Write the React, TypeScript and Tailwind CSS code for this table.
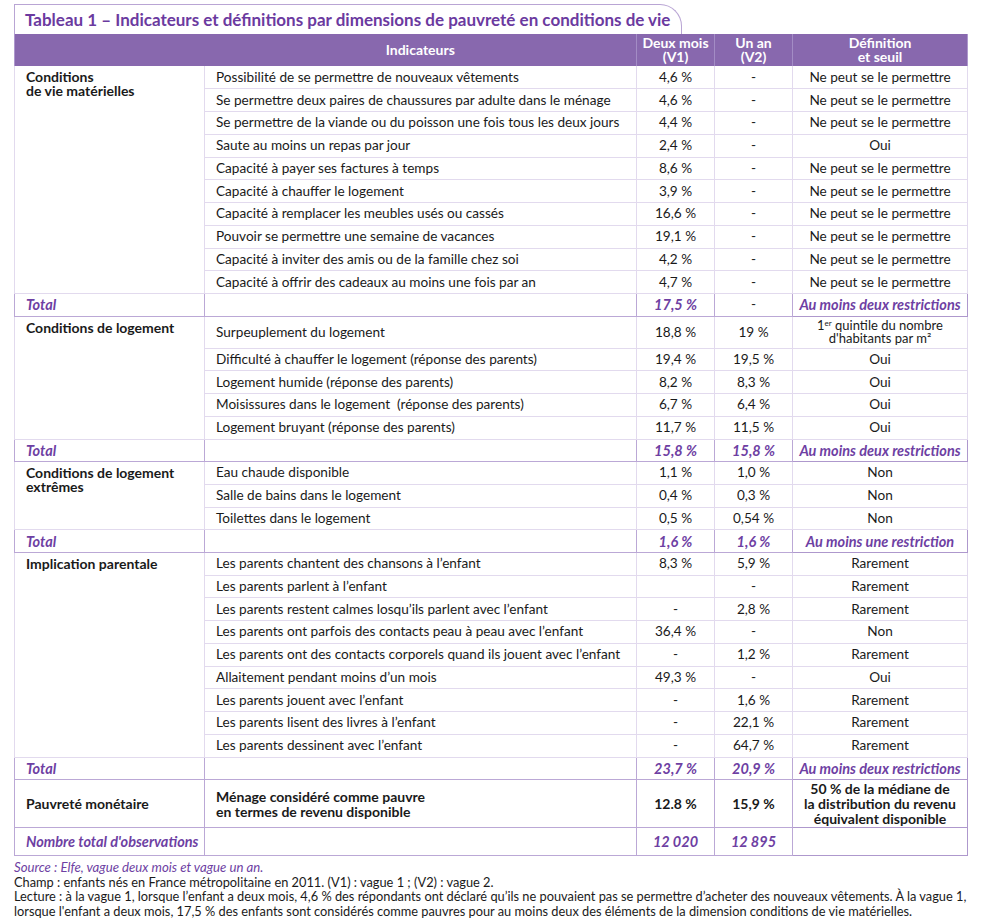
import React from 'react';

type Row = [string, string, string, string];

type Group = {
  label: string[];
  rows: Row[];
  total: [string, string, string];
};

const NPP = 'Ne peut se le permettre';

const groups: Group[] = [
  {
    label: ['Conditions', 'de vie matérielles'],
    rows: [
      ['Possibilité de se permettre de nouveaux vêtements', '4,6 %', '-', NPP],
      ['Se permettre deux paires de chaussures par adulte dans le ménage', '4,6 %', '-', NPP],
      ['Se permettre de la viande ou du poisson une fois tous les deux jours', '4,4 %', '-', NPP],
      ['Saute au moins un repas par jour', '2,4 %', '-', 'Oui'],
      ['Capacité à payer ses factures à temps', '8,6 %', '-', NPP],
      ['Capacité à chauffer le logement', '3,9 %', '-', NPP],
      ['Capacité à remplacer les meubles usés ou cassés', '16,6 %', '-', NPP],
      ['Pouvoir se permettre une semaine de vacances', '19,1 %', '-', NPP],
      ['Capacité à inviter des amis ou de la famille chez soi', '4,2 %', '-', NPP],
      ['Capacité à offrir des cadeaux au moins une fois par an', '4,7 %', '-', NPP],
    ],
    total: ['17,5 %', '-', 'Au moins deux restrictions'],
  },
  {
    label: ['Conditions de logement'],
    rows: [
      ['Surpeuplement du logement', '18,8 %', '19 %', 'QUINTILE'],
      ['Difficulté à chauffer le logement (réponse des parents)', '19,4 %', '19,5 %', 'Oui'],
      ['Logement humide (réponse des parents)', '8,2 %', '8,3 %', 'Oui'],
      ['Moisissures dans le logement  (réponse des parents)', '6,7 %', '6,4 %', 'Oui'],
      ['Logement bruyant (réponse des parents)', '11,7 %', '11,5 %', 'Oui'],
    ],
    total: ['15,8 %', '15,8 %', 'Au moins deux restrictions'],
  },
  {
    label: ['Conditions de logement', 'extrêmes'],
    rows: [
      ['Eau chaude disponible', '1,1 %', '1,0 %', 'Non'],
      ['Salle de bains dans le logement', '0,4 %', '0,3 %', 'Non'],
      ['Toilettes dans le logement', '0,5 %', '0,54 %', 'Non'],
    ],
    total: ['1,6 %', '1,6 %', 'Au moins une restriction'],
  },
  {
    label: ['Implication parentale'],
    rows: [
      ['Les parents chantent des chansons à l’enfant', '8,3 %', '5,9 %', 'Rarement'],
      ['Les parents parlent à l’enfant', '', '-', 'Rarement'],
      ['Les parents restent calmes losqu’ils parlent avec l’enfant', '-', '2,8 %', 'Rarement'],
      ['Les parents ont parfois des contacts peau à peau avec l’enfant', '36,4 %', '-', 'Non'],
      ['Les parents ont des contacts corporels quand ils jouent avec l’enfant', '-', '1,2 %', 'Rarement'],
      ['Allaitement pendant moins d’un mois', '49,3 %', '-', 'Oui'],
      ['Les parents jouent avec l’enfant', '-', '1,6 %', 'Rarement'],
      ['Les parents lisent des livres à l’enfant', '-', '22,1 %', 'Rarement'],
      ['Les parents dessinent avec l’enfant', '-', '64,7 %', 'Rarement'],
    ],
    total: ['23,7 %', '20,9 %', 'Au moins deux restrictions'],
  },
];

// couleurs des filets
const vLine = 'border-r border-[#bba8d6]';
const light = 'border-b border-[#e2daee]';
const dark = 'border-b border-[#ae98cd]';
const purple = 'text-[#6e3fa3]';
const ib = `${purple} italic font-bold text-[14.5px]`;

function TotalRow({ total }: { total: [string, string, string] }) {
  const cls = (v: string) => (v === '-' ? 'text-[#222]' : ib);
  return (
    <tr className="h-[22.5px]">
      <td className={`pl-[11px] ${ib} border-l border-[#ae98cd] ${vLine} ${dark}`}>Total</td>
      <td className={`${vLine} ${dark}`}></td>
      <td className={`text-center ${cls(total[0])} ${vLine} ${dark}`}>{total[0]}</td>
      <td className={`text-center ${cls(total[1])} ${vLine} ${dark}`}>{total[1]}</td>
      <td className={`text-center whitespace-nowrap ${ib} border-r border-[#ae98cd] ${dark}`}>{total[2]}</td>
    </tr>
  );
}

function GroupRows({ group }: { group: Group }) {
  return (
    <>
      {group.rows.map((r, i) => (
        <tr key={i} className={r[3] === 'QUINTILE' ? 'h-[32px]' : 'h-[22.75px]'}>
          {i === 0 && (
            <td
              rowSpan={group.rows.length}
              className={`align-top pt-[4px] pl-[11px] font-bold text-[14px] leading-[14px] border-l border-[#ae98cd] ${vLine} ${light}`}
            >
              {group.label.map((l) => (
                <div key={l}>{l}</div>
              ))}
            </td>
          )}
          <td className={`pl-[11px] whitespace-pre ${vLine} ${light}`}>{r[0]}</td>
          <td className={`text-center ${vLine} ${light}`}>{r[1]}</td>
          <td className={`text-center ${vLine} ${light}`}>{r[2]}</td>
          <td className={`text-center whitespace-nowrap border-r border-[#ae98cd] ${light}`}>
            {r[3] === 'QUINTILE' ? (
              <div className="text-[13px] leading-[13px]">
                1<sup className="text-[8px] leading-none">er</sup> quintile du nombre
                <br />
                d'habitants par m²
              </div>
            ) : (
              r[3]
            )}
          </td>
        </tr>
      ))}
      <TotalRow total={group.total} />
    </>
  );
}

export default function App() {
  return (
    <div className="pl-[14px] pt-[4px] text-[13.6px] text-[#1a1a1a] font-['Lato','Open_Sans',sans-serif]">
      <div className="w-[668px] h-[30px] border-t border-l border-r border-[#b9a5d4] rounded-tr-[22px] pl-[10px] leading-[30px] text-[17px] font-bold text-[#6b3a9f] whitespace-nowrap">
        Tableau 1 – Indicateurs et définitions par dimensions de pauvreté en conditions de vie
      </div>
      <table className="w-[953px] table-fixed border-collapse leading-[15px]">
        <colgroup>
          <col className="w-[190px]" />
          <col className="w-[432px]" />
          <col className="w-[78px]" />
          <col className="w-[78px]" />
          <col className="w-[175px]" />
        </colgroup>
        <thead>
          <tr className="h-[32px] bg-[#8868ae] text-white font-bold text-[14px] leading-[14px]">
            <th className="border-l border-[#ae98cd]"></th>
            <th className="text-center border-r border-[#a38cc5]">Indicateurs</th>
            <th className="text-center border-r border-[#a38cc5]">
              Deux mois
              <br />
              (V1)
            </th>
            <th className="text-center border-r border-[#a38cc5]">
              Un an
              <br />
              (V2)
            </th>
            <th className="text-center border-r border-[#ae98cd]">
              Définition
              <br />
              et seuil
            </th>
          </tr>
        </thead>
        <tbody>
          {groups.map((g) => (
            <GroupRows key={g.label.join(' ')} group={g} />
          ))}
          <tr className="h-[48px] font-bold text-[14px]">
            <td className={`pl-[11px] border-l border-[#ae98cd] ${vLine} ${dark}`}>Pauvreté monétaire</td>
            <td className={`pl-[11px] leading-[15px] ${vLine} ${dark}`}>
              Ménage considéré comme pauvre
              <br />
              en termes de revenu disponible
            </td>
            <td className={`text-center ${vLine} ${dark}`}>12.8 %</td>
            <td className={`text-center ${vLine} ${dark}`}>15,9 %</td>
            <td className={`text-center whitespace-nowrap leading-[15px] border-r border-[#ae98cd] ${dark}`}>
              50 % de la médiane de
              <br />
              la distribution du revenu
              <br />
              équivalent disponible
            </td>
          </tr>
          <tr className={`h-[28px] ${ib}`}>
            <td className={`pl-[11px] whitespace-nowrap border-l border-[#ae98cd] ${vLine} ${dark}`}>
              Nombre total d'observations
            </td>
            <td className={`${vLine} ${dark}`}></td>
            <td className={`text-center ${vLine} ${dark}`}>12 020</td>
            <td className={`text-center ${vLine} ${dark}`}>12 895</td>
            <td className={`border-r border-[#ae98cd] ${dark}`}></td>
          </tr>
        </tbody>
      </table>
      <div className="mt-[4px] text-[12.8px] leading-[14.5px] whitespace-nowrap">
        <div className={`${purple} italic text-[13.2px]`}>Source : Elfe, vague deux mois et vague un an.</div>
        <div>Champ : enfants nés en France métropolitaine en 2011. (V1) : vague 1 ; (V2) : vague 2.</div>
        <div>
          Lecture : à la vague 1, lorsque l’enfant a deux mois, 4,6 % des répondants ont déclaré qu’ils ne pouvaient pas se
          permettre d’acheter des nouveaux vêtements. À la vague 1,
        </div>
        <div>
          lorsque l'enfant a deux mois, 17,5 % des enfants sont considérés comme pauvres pour au moins deux des éléments de la
          dimension conditions de vie matérielles.
        </div>
      </div>
    </div>
  );
}
